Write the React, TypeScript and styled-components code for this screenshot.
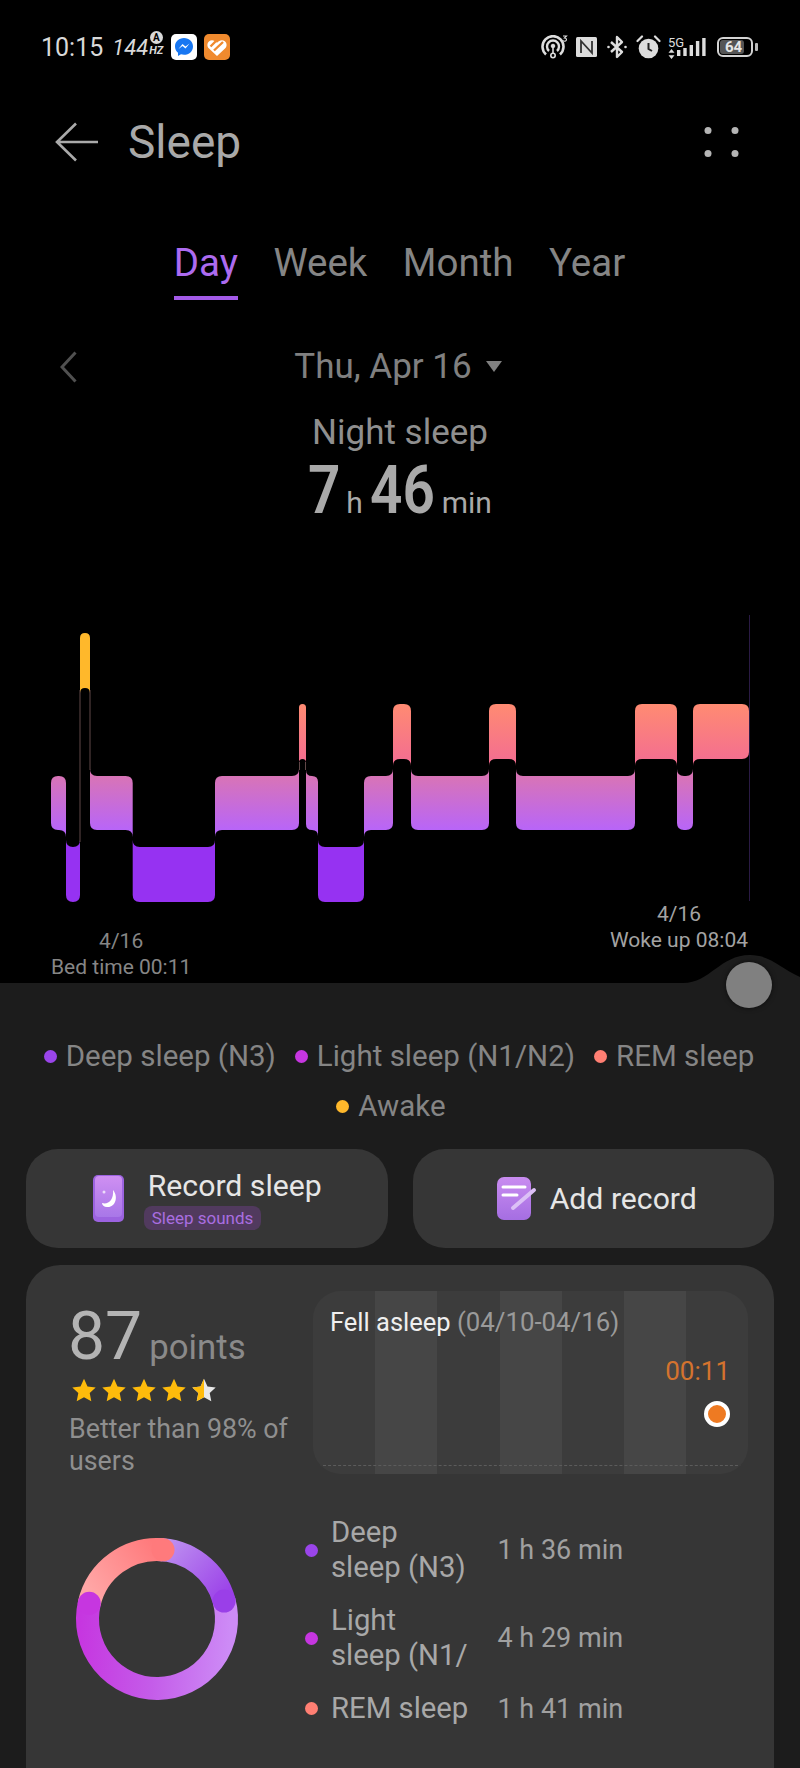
import React from "react";
import styled, { createGlobalStyle } from "styled-components";

const GlobalStyle = createGlobalStyle`
	html, body {
		margin: 0;
		padding: 0;
		background: #000;
		overflow: hidden;
	}
	* {
		box-sizing: border-box;
	}
`;

const Page = styled.div`
	width: 800px;
	height: 1768px;
	overflow: hidden;
	background: #000;
	font-family: Roboto, "Liberation Sans", sans-serif;
	display: flex;
	flex-direction: column;
	& > * {
		flex: none;
	}
`;

const StatusBar = styled.div`
	height: 94px;
	padding: 0 47px 0 41px;
	display: flex;
	align-items: center;
	justify-content: space-between;
`;

const StatusGroup = styled.div`
	display: flex;
	align-items: center;
`;

const Clock = styled.span`
	font-size: 25px;
	color: #d9d9d9;
	margin-right: 9px;
`;

const Rate = styled.span`
	font-size: 22px;
	font-style: italic;
	color: #d9d9d9;
`;

const RateUnit = styled.div`
	display: flex;
	flex-direction: column;
	align-items: center;
	margin: -6px 8px 0 1px;
`;

const AutoMark = styled.span`
	width: 13px;
	height: 13px;
	border-radius: 50%;
	background: #d9d9d9;
	color: #000;
	font-size: 10px;
	font-weight: 700;
	line-height: 13px;
	text-align: center;
`;

const Hz = styled.span`
	font-size: 11px;
	line-height: 13px;
	font-weight: 700;
	font-style: italic;
	color: #d9d9d9;
`;

const AppIcon = styled.svg`
	display: block;
	margin-right: 7px;
`;

const RightIcon = styled.svg<{ $gap: number }>`
	display: block;
	margin-right: ${props => props.$gap}px;
`;

const Network = styled.div`
	width: 9px;
	margin-right: 0;
	display: flex;
	flex-direction: column;
	align-items: flex-start;
	color: #ddd;
`;

const NetworkLabel = styled.span`
	font-size: 13px;
	line-height: 13px;
	white-space: nowrap;
`;

const Battery = styled.div`
	position: relative;
	width: 36px;
	height: 20px;
	border: 2px solid #d4d4d4;
	border-radius: 6px;
	padding: 1px;
	margin-left: 11px;
	&::after {
		content: "";
		position: absolute;
		right: -7px;
		top: 4px;
		width: 3px;
		height: 8px;
		border-radius: 1px;
		background: #bbb;
	}
`;

const BatteryLevel = styled.div`
	height: 100%;
	width: 80%;
	background: #555;
	border-radius: 3px;
	font-size: 15px;
	line-height: 14px;
	font-weight: 700;
	color: #e6e6e6;
	white-space: nowrap;
	padding-left: 5px;
`;

const TopBar = styled.div`
	height: 96px;
	padding: 0 60px 0 55px;
	display: flex;
	align-items: center;
`;

const PageTitle = styled.h1`
	margin: 0 0 0 30px;
	flex: 1;
	font-size: 46px;
	font-weight: 400;
	color: #a9a9a9;
`;

const Tabs = styled.div`
	margin-top: 45px;
	display: flex;
	justify-content: center;
	gap: 35.5px;
	padding-right: 1px;
`;

const Tab = styled.div<{ $active?: boolean }>`
	height: 65px;
	font-size: 38.5px;
	line-height: 56px;
	color: ${props => (props.$active ? "#ad6bf0" : "#858585")};
	border-bottom: 4px solid ${props => (props.$active ? "#a35ae8" : "transparent")};
`;

const DateRow = styled.div`
	margin-top: 46px;
	height: 40px;
	padding: 0 64px 0 60px;
	display: grid;
	grid-template-columns: 1fr auto 1fr;
	align-items: center;
`;

const DateLabel = styled.div`
	display: flex;
	align-items: center;
	gap: 14px;
	font-size: 35px;
	color: #808080;
`;

const Caret = styled.span`
	width: 0;
	height: 0;
	border-left: 8px solid transparent;
	border-right: 8px solid transparent;
	border-top: 11px solid #808080;
`;

const NightLabel = styled.div`
	margin-top: 27px;
	height: 40px;
	line-height: 40px;
	text-align: center;
	font-size: 35px;
	color: #8f8f8f;
`;

const Duration = styled.div`
	margin-top: 7px;
	height: 62px;
	display: flex;
	justify-content: center;
	align-items: baseline;
	color: #a9a9a9;
`;

const Digits = styled.span<{ $width: number }>`
	display: inline-block;
	width: ${props => props.$width}px;
	font-size: 66px;
	line-height: 62px;
	font-weight: 600;
	transform: scaleX(0.86);
	transform-origin: left;
`;

const Unit = styled.span<{ $after: number }>`
	font-size: 30px;
	margin: 0 ${props => props.$after}px 0 9px;
`;

const Chart = styled.svg`
	display: block;
	margin-top: 93px;
	overflow: visible;
`;

const ChartLabels = styled.div`
	height: 82px;
	padding: 0 52px 0 51px;
	display: flex;
	justify-content: space-between;
`;

const TimeLabel = styled.div<{ $drop?: boolean }>`
	padding-top: ${props => (props.$drop ? 27 : 0)}px;
	font-size: 21px;
	line-height: 26px;
	text-align: center;
	color: ${props => (props.$drop ? "#868686" : "#a3a3a3")};
`;

const Sheet = styled.div`
	position: relative;
	background: #1c1c1c;
	padding: 48px 26px 0;
`;

const Hump = styled.svg`
	position: absolute;
	right: 0;
	top: -30px;
`;

const Knob = styled.div`
	position: absolute;
	left: 726px;
	top: -21px;
	width: 46px;
	height: 46px;
	border-radius: 50%;
	background: #808080;
	box-shadow: 0 0 5px rgba(0, 0, 0, 0.6);
`;

const Legend = styled.div`
	display: flex;
	flex-wrap: wrap;
	justify-content: center;
	column-gap: 19px;
	height: 99px;
	padding-right: 2px;
`;

const LegendItem = styled.div`
	display: flex;
	align-items: center;
	gap: 9px;
	height: 50px;
	font-size: 29.5px;
	color: #858585;
	&:last-child {
		margin-right: 16px;
	}
`;

const Dot = styled.span<{ $color: string }>`
	flex: none;
	width: 13px;
	height: 13px;
	border-radius: 50%;
	background: ${props => props.$color};
`;

const Actions = styled.div`
	margin-top: 19px;
	display: grid;
	grid-template-columns: 1fr 1fr;
	gap: 25px;
`;

const ActionButton = styled.div<{ $gap: number; $shift?: number }>`
	height: 99px;
	border-radius: 32px;
	background: #363636;
	display: flex;
	align-items: center;
	justify-content: center;
	gap: ${props => props.$gap}px;
	padding-left: ${props => props.$shift || 0}px;
`;

const ActionText = styled.div`
	display: flex;
	flex-direction: column;
	align-items: flex-start;
`;

const ActionTitle = styled.span`
	font-size: 30.2px;
	line-height: 38px;
	color: #e6e6e6;
`;

const SoundsBadge = styled.span`
	margin: 1px 0 0 -4px;
	padding: 0 8px;
	height: 24px;
	line-height: 24px;
	border-radius: 8px;
	background: #513a5e;
	color: #a96ee0;
	font-size: 17px;
`;

const Card = styled.div`
	margin-top: 17px;
	height: 540px;
	border-radius: 34px;
	background: #363636;
	padding: 26px 26px 0 0;
`;

const CardTop = styled.div`
	display: grid;
	grid-template-columns: 1fr 435px;
`;

const Score = styled.div`
	padding: 13px 0 0 42px;
`;

const ScoreLine = styled.div`
	height: 66px;
	display: flex;
	align-items: baseline;
	gap: 7px;
	line-height: 66px;
	color: #8a8a8a;
	font-size: 34.8px;
`;

const ScoreValue = styled.span`
	font-size: 66px;
	font-weight: 400;
	color: #b4b4b4;
`;

const Stars = styled.div`
	margin: 8px 0 0 4px;
	display: flex;
	gap: 6px;
`;

const Ranking = styled.div`
	margin: 11px 0 0 1px;
	font-size: 26.8px;
	line-height: 32px;
	color: #8f8f8f;
`;

const Trend = styled.div`
	height: 183px;
	border-radius: 28px;
	overflow: hidden;
	padding: 16px 18px 0 17px;
	background: repeating-linear-gradient(90deg, #3c3c3c 0 62.2px, #464646 62.2px 124.4px);
`;

const TrendTitle = styled.div`
	font-size: 25.5px;
	line-height: 30px;
	color: #efefef;
	white-space: nowrap;
	span {
		color: #9a9a9a;
		font-size: 25.8px;
	}
`;

const TrendValue = styled.div`
	margin: 19px 0 0 0;
	text-align: right;
	font-size: 26px;
	line-height: 30px;
	color: #d4732e;
`;

const TrendPoint = styled.div`
	margin: 15px 0 0 auto;
	width: 26px;
	height: 26px;
	border-radius: 50%;
	background: #ee7a22;
	border: 4.5px solid #fff;
`;

const TrendBase = styled.div`
	margin: 38px -18px 0 -17px;
	border-top: 1px dashed #5c5c5c;
`;

const Breakdown = styled.div`
	margin-top: 38px;
	padding-left: 46px;
	display: flex;
	align-items: center;
`;

const Donut = styled.svg`
	display: block;
	flex: none;
	margin-bottom: 4px;
`;

const StageList = styled.div`
	margin-left: 62.5px;
	display: flex;
	flex-direction: column;
	gap: 18px;
`;

const StageRow = styled.div`
	display: grid;
	grid-template-columns: 13px 138px auto;
	column-gap: 13.5px;
	align-items: center;
`;

const StageName = styled.div`
	font-size: 29.3px;
	line-height: 35px;
	max-height: 70px;
	overflow: hidden;
	color: #a8a8a8;
`;

const StageTime = styled.div`
	margin-left: 15px;
	font-size: 27px;
	color: #a0a0a0;
`;

type Stage = "awake" | "rem" | "light" | "deep";

const LEVELS: Record<Stage, [number, number]> = {
	awake: [633, 688],
	rem: [704, 759],
	light: [776, 830],
	deep: [847, 902],
};

const FILLS: Record<Stage, string> = {
	awake: "#ffb82b",
	rem: "url(#remFill)",
	light: "url(#lightFill)",
	deep: "#9632f2",
};

const SEGMENTS: [Stage, number, number][] = [
	["light", 51, 66],
	["deep", 66, 80],
	["awake", 80, 90],
	["light", 90, 132.7],
	["deep", 132.7, 215],
	["light", 215, 299],
	["rem", 299, 306],
	["light", 306, 318],
	["deep", 318, 364],
	["light", 364, 393],
	["rem", 393, 411],
	["light", 411, 489],
	["rem", 489, 516],
	["light", 516, 635],
	["rem", 635, 677],
	["light", 677, 693],
	["rem", 693, 749],
];

// one block of the hypnogram, corners flare out towards the neighbouring stage
function segmentPath(index: number) {
	const [stage, x0, x1] = SEGMENTS[index];
	const [top, bottom] = LEVELS[stage];
	const prev = SEGMENTS[index - 1] ? LEVELS[SEGMENTS[index - 1][0]][0] : top;
	const next = SEGMENTS[index + 1] ? LEVELS[SEGMENTS[index + 1][0]][0] : top;
	const r = Math.min(7, (x1 - x0) / 2);
	return [
		`M${x0} ${prev < top ? top - r : top + r}`,
		`Q${x0} ${top} ${x0 + r} ${top}`,
		`L${x1 - r} ${top}`,
		`Q${x1} ${top} ${x1} ${next < top ? top - r : top + r}`,
		`L${x1} ${next > top ? bottom + r : bottom - r}`,
		`Q${x1} ${bottom} ${x1 - r} ${bottom}`,
		`L${x0 + r} ${bottom}`,
		`Q${x0} ${bottom} ${x0} ${prev > top ? bottom + r : bottom - r}`,
		"Z",
	].join(" ");
}

const polar = (deg: number, r = 69.5) => {
	const a = (deg * Math.PI) / 180;
	return [85 + r * Math.sin(a), 85 - r * Math.cos(a)];
};

function arcPath(from: number, to: number) {
	const [x0, y0] = polar(from);
	const [x1, y1] = polar(to);
	return `M${x0} ${y0} A69.5 69.5 0 ${to - from > 180 ? 1 : 0} 1 ${x1} ${y1}`;
}

const RING = [
	{ from: 0, to: 75, stroke: "url(#ringDeep)", end: "#9a3fe8" },
	{ from: 75, to: 283, stroke: "url(#ringLight)", end: "#c636e0" },
	{ from: 283, to: 365, stroke: "url(#ringRem)", end: "#ff7a7c" },
];

const STAR_PATH = "M12 .8l3.500 7.600 8.200 1-6 5.700 1.600 8.200L12 19.200l-7.300 4.100 1.600-8.200-6-5.700 8.200-1z";

const Star = ({ half }: { half?: boolean }) => (
	<svg width="24" height="24" viewBox="0 0 24 24">
		<defs>
			<clipPath id="starHalf">
				<rect x="0" y="0" width="12" height="24" />
			</clipPath>
		</defs>
		<path d={STAR_PATH} fill={half ? "#e8e8e8" : "#ffbb0b"} />
		{half && <path d={STAR_PATH} fill="#ffbb0b" clipPath="url(#starHalf)" />}
	</svg>
);

export default function App() {
	return (
		<Page>
			<GlobalStyle />
			<StatusBar>
				<StatusGroup>
					<Clock>10:15</Clock>
					<Rate>144</Rate>
					<RateUnit>
						<AutoMark>A</AutoMark>
						<Hz>HZ</Hz>
					</RateUnit>
					<AppIcon width="26" height="26" viewBox="0 0 26 26">
						<rect width="26" height="26" rx="5" fill="#fff" />
						<path d="M13 4C7.800 4 4 7.700 4 12.400c0 2.600 1.100 4.800 3 6.300V22l3-1.700c1 .3 2 .4 3 .4 5.200 0 9-3.700 9-8.300S18.200 4 13 4z" fill="#1877f2" />
						<path d="M7.500 15l4-5 3 2.600L18.500 9.500l-4 5-3-2.600z" fill="#fff" />
					</AppIcon>
					<AppIcon width="26" height="26" viewBox="0 0 26 26">
						<rect width="26" height="26" rx="5" fill="#f08a2e" />
						<path d="M13 22L5 14.500C2.700 12.200 3 8.800 5.200 7.200c2.400-1.700 5.500-1 7.800 1.500 2.300-2.500 5.400-3.200 7.800-1.500 2.200 1.600 2.500 5 .2 7.300z" fill="#fff" />
						<path d="M6.500 12.500L12.500 6.500M10 16.500L19 8" stroke="#f08a2e" strokeWidth="2.400" />
					</AppIcon>
				</StatusGroup>
				<StatusGroup>
					<RightIcon $gap={8} width="28" height="24" viewBox="0 0 28 24" fill="none" stroke="#ddd">
						<path d="M6 19.500A10.500 10.500 0 1 1 20 19.500" strokeWidth="2.600" />
						<path d="M9 16A6 6 0 1 1 17 16" strokeWidth="2.400" />
						<circle cx="13" cy="11" r="1.800" fill="#ddd" />
						<path d="M13 12v7" strokeWidth="1.600" />
						<circle cx="13" cy="20.500" r="2.200" strokeWidth="1.600" />
						<path d="M23 1h3.500l-2 2c1.500 0 2 .8 2 1.600 0 1.800-2.400 2-3.500 1" strokeWidth="1.100" />
					</RightIcon>
					<RightIcon $gap={10} width="21" height="20" viewBox="0 0 21 20">
						<rect width="21" height="20" rx="1.500" fill="#ddd" />
						<path d="M5 16V4l11 12V4" fill="none" stroke="#333" strokeWidth="1.800" />
					</RightIcon>
					<RightIcon $gap={9} width="20" height="24" viewBox="0 0 20 24" fill="none" stroke="#ddd" strokeWidth="2.400">
						<path d="M4 7l11 10-5 5V2l5 5L4 17" strokeLinejoin="round" />
						<circle cx="1.500" cy="12" r="1.300" fill="#ddd" stroke="none" />
						<circle cx="18.500" cy="12" r="1.300" fill="#ddd" stroke="none" />
					</RightIcon>
					<RightIcon $gap={7} width="25" height="24" viewBox="0 0 25 24">
						<circle cx="12.500" cy="13.500" r="9.800" fill="#ddd" />
						<path d="M12.500 8v6l3.500 2" fill="none" stroke="#222" strokeWidth="2" />
						<path d="M1.500 6L6 1.500M23.500 6L19 1.500" stroke="#ddd" strokeWidth="2.200" strokeLinecap="round" />
					</RightIcon>
					<Network>
						<NetworkLabel>5G</NetworkLabel>
						<svg width="7" height="10" viewBox="0 0 7 10">
							<path d="M3.500 0l3 3.800H.5zM3.500 10l3-3.800H.5z" fill="#ddd" />
						</svg>
					</Network>
					<svg width="29" height="18" viewBox="0 0 29 18">
						<path d="M0 12h3.400v6H0zM6.300 10h3.400v8H6.300zM12.600 7h3.400v11h-3.400zM18.900 3h3.400v15h-3.400zM25.200 0h3.400v18h-3.400z" fill="#ddd" />
					</svg>
					<Battery>
						<BatteryLevel>64</BatteryLevel>
					</Battery>
				</StatusGroup>
			</StatusBar>

			<TopBar>
				<svg width="43" height="40" viewBox="0 0 43 40" fill="none" stroke="#aaa" strokeWidth="2.600">
					<path d="M21 1.500L2 20l19 18.500M2 20h41" />
				</svg>
				<PageTitle>Sleep</PageTitle>
				<svg width="36" height="32" viewBox="0 0 36 32">
					<circle cx="4" cy="4.500" r="3.500" fill="#b5b5b5" />
					<circle cx="31" cy="4.500" r="3.500" fill="#b5b5b5" />
					<circle cx="4" cy="27.500" r="3.500" fill="#b5b5b5" />
					<circle cx="31" cy="27.500" r="3.500" fill="#b5b5b5" />
				</svg>
			</TopBar>

			<Tabs>
				<Tab $active>Day</Tab>
				<Tab>Week</Tab>
				<Tab>Month</Tab>
				<Tab>Year</Tab>
			</Tabs>

			<DateRow>
				<svg width="17" height="32" viewBox="0 0 17 32" fill="none" stroke="#505050" strokeWidth="3">
					<path d="M15.500 1.500L2 16l13.500 14.500" />
				</svg>
				<DateLabel>
					Thu, Apr 16
					<Caret />
				</DateLabel>
			</DateRow>

			<NightLabel>Night sleep</NightLabel>
			<Duration>
				<Digits $width={29}>7</Digits>
				<Unit $after={7}>h</Unit>
				<Digits $width={63}>46</Digits>
				<Unit $after={0}>min</Unit>
			</Duration>

			<Chart width="800" height="286" viewBox="0 615 800 286">
				<defs>
					<linearGradient id="remFill" gradientUnits="userSpaceOnUse" x1="0" y1="704" x2="0" y2="759">
						<stop offset="0" stopColor="#ff8b72" />
						<stop offset="1" stopColor="#f46f8f" />
					</linearGradient>
					<linearGradient id="lightFill" gradientUnits="userSpaceOnUse" x1="0" y1="776" x2="0" y2="830">
						<stop offset="0" stopColor="#d874b6" />
						<stop offset="1" stopColor="#b865f8" />
					</linearGradient>
				</defs>
				<path d="M749.500 615V901" stroke="#2a1a44" strokeWidth="1" />
				<path d="M80 690V842M90 690V770M299.500 762V770M305.500 762V770" stroke="#7a5a5a" strokeWidth="0.800" />
				{SEGMENTS.map((segment, i) => (
					<path key={i} d={segmentPath(i)} fill={FILLS[segment[0]]} />
				))}
			</Chart>

			<ChartLabels>
				<TimeLabel $drop>
					4/16
					<br />
					Bed time 00:11
				</TimeLabel>
				<TimeLabel>
					4/16
					<br />
					Woke up 08:04
				</TimeLabel>
			</ChartLabels>

			<Sheet>
				<Hump width="140" height="30" viewBox="0 0 140 30">
					<path d="M0 30H23C50 30 60 2 90 2C110 2 120 15 140 24V30Z" fill="#1c1c1c" />
				</Hump>
				<Knob />
				<Legend>
					<LegendItem>
						<Dot $color="#9a45ea" />
						Deep sleep (N3)
					</LegendItem>
					<LegendItem>
						<Dot $color="#c636e0" />
						Light sleep (N1/N2)
					</LegendItem>
					<LegendItem>
						<Dot $color="#ff7f73" />
						REM sleep
					</LegendItem>
					<LegendItem>
						<Dot $color="#ffb82b" />
						Awake
					</LegendItem>
				</Legend>

				<Actions>
					<ActionButton $gap={24} $shift={1}>
						<svg width="31" height="47" viewBox="0 0 31 47">
							<defs>
								<linearGradient id="phoneFill" x1="0" y1="0" x2="0" y2="1">
									<stop offset="0" stopColor="#cf8ff2" />
									<stop offset="1" stopColor="#a877e8" />
								</linearGradient>
							</defs>
							<rect width="31" height="47" rx="5" fill="#9c63e0" />
							<rect x="2" y="1" width="27" height="41" rx="4" fill="url(#phoneFill)" />
							<path d="M20 15C26 22 22 33 14 32C11 32 9 30 9 28C15 30 21 25 20 15z" fill="#fff" />
							<circle cx="11" cy="17" r="1.500" fill="#ecdcfa" />
						</svg>
						<ActionText>
							<ActionTitle>Record sleep</ActionTitle>
							<SoundsBadge>Sleep sounds</SoundsBadge>
						</ActionText>
					</ActionButton>
					<ActionButton $gap={13} $shift={7}>
						<svg width="40" height="44" viewBox="0 0 40 44">
							<defs>
								<linearGradient id="noteFill" x1="0" y1="0" x2="0" y2="1">
									<stop offset="0" stopColor="#c98cf0" />
									<stop offset="1" stopColor="#a56ee2" />
								</linearGradient>
							</defs>
							<rect width="34" height="43" rx="7" fill="url(#noteFill)" />
							<path d="M6 10h22M6 18h14" stroke="#fff" strokeWidth="3" strokeLinecap="round" />
							<path d="M16 31L37 13" stroke="#dcc0f6" strokeWidth="4" strokeLinecap="round" />
						</svg>
						<ActionText>
							<ActionTitle>Add record</ActionTitle>
						</ActionText>
					</ActionButton>
				</Actions>

				<Card>
					<CardTop>
						<Score>
							<ScoreLine>
								<ScoreValue>87</ScoreValue>
								points
							</ScoreLine>
							<Stars>
								<Star />
								<Star />
								<Star />
								<Star />
								<Star half />
							</Stars>
							<Ranking>Better than 98% of users</Ranking>
						</Score>
						<Trend>
							<TrendTitle>
								Fell asleep <span>(04/10-04/16)</span>
							</TrendTitle>
							<TrendValue>00:11</TrendValue>
							<TrendPoint />
							<TrendBase />
						</Trend>
					</CardTop>

					<Breakdown>
						<Donut width="170" height="170" viewBox="0 0 170 170" fill="none">
							<defs>
								<linearGradient id="ringDeep" gradientUnits="userSpaceOnUse" x1="90" y1="15" x2="150" y2="70">
									<stop offset="0" stopColor="#bd90f0" />
									<stop offset="1" stopColor="#9a3fe8" />
								</linearGradient>
								<linearGradient id="ringLight" gradientUnits="userSpaceOnUse" x1="160" y1="70" x2="10" y2="60">
									<stop offset="0" stopColor="#cd8bf6" />
									<stop offset="0.5" stopColor="#c45ce9" />
									<stop offset="1" stopColor="#c636e0" />
								</linearGradient>
								<linearGradient id="ringRem" gradientUnits="userSpaceOnUse" x1="20" y1="60" x2="85" y2="15">
									<stop offset="0" stopColor="#ffa6a6" />
									<stop offset="1" stopColor="#ff7a7c" />
								</linearGradient>
							</defs>
							{RING.map(part => (
								<path key={part.from} d={arcPath(part.from, part.to)} stroke={part.stroke} strokeWidth="23" />
							))}
							{RING.map(part => {
								const [cx, cy] = polar(part.to);
								return <circle key={part.to} cx={cx} cy={cy} r="11.500" fill={part.end} />;
							})}
						</Donut>
						<StageList>
							<StageRow>
								<Dot $color="#9a45ea" />
								<StageName>Deep sleep (N3)</StageName>
								<StageTime>1 h 36 min</StageTime>
							</StageRow>
							<StageRow>
								<Dot $color="#c636e0" />
								<StageName>
									Light sleep (N1/
									<wbr />
									N2)
								</StageName>
								<StageTime>4 h 29 min</StageTime>
							</StageRow>
							<StageRow>
								<Dot $color="#ff7f73" />
								<StageName>REM sleep</StageName>
								<StageTime>1 h 41 min</StageTime>
							</StageRow>
						</StageList>
					</Breakdown>
				</Card>
			</Sheet>
		</Page>
	);
}
